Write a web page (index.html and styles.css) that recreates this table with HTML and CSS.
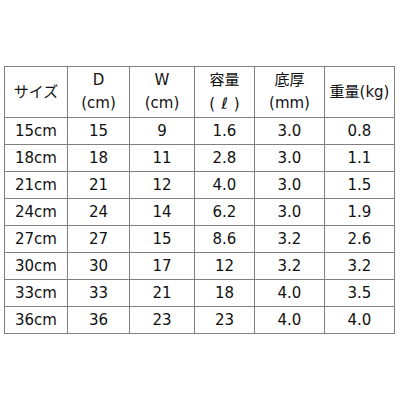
FILE: index.html
```html
<!DOCTYPE html>
<html>
<head>
<meta charset="utf-8">
<link rel="stylesheet" href="styles.css">
</head>
<body>
<table class="spec">
<colgroup>
<col class="c1"><col class="c2"><col class="c3"><col class="c4"><col class="c5"><col class="c6">
</colgroup>
<thead>
<tr class="head">
<th>サイズ</th>
<th>D<br>(cm)</th>
<th>W<br>(cm)</th>
<th>容量<br>(<span class="litre">ℓ</span>)</th>
<th>底厚<br>(mm)</th>
<th>重量(kg)</th>
</tr>
</thead>
<tbody>
<tr><td>15cm</td><td>15</td><td>9</td><td>1.6</td><td>3.0</td><td>0.8</td></tr>
<tr><td>18cm</td><td>18</td><td>11</td><td>2.8</td><td>3.0</td><td>1.1</td></tr>
<tr><td>21cm</td><td>21</td><td>12</td><td>4.0</td><td>3.0</td><td>1.5</td></tr>
<tr><td>24cm</td><td>24</td><td>14</td><td>6.2</td><td>3.0</td><td>1.9</td></tr>
<tr><td>27cm</td><td>27</td><td>15</td><td>8.6</td><td>3.2</td><td>2.6</td></tr>
<tr><td>30cm</td><td>30</td><td>17</td><td>12</td><td>3.2</td><td>3.2</td></tr>
<tr><td>33cm</td><td>33</td><td>21</td><td>18</td><td>4.0</td><td>3.5</td></tr>
<tr><td>36cm</td><td>36</td><td>23</td><td>23</td><td>4.0</td><td>4.0</td></tr>
</tbody>
</table>
</body>
</html>
```
FILE: styles.css
```css
html, body {
  margin: 0;
  padding: 0;
  background: #fff;
}
body {
  font-family: "DejaVu Sans", "Noto Sans CJK JP", sans-serif;
  font-size: 15px;
  color: #111;
}
.spec {
  border-collapse: collapse;
  table-layout: fixed;
  width: 390px;
  margin: 66px 0 0 4px;
}
.c1 { width: 63px; }
.c2 { width: 62px; }
.c3 { width: 65px; }
.c4 { width: 60px; }
.c5 { width: 70px; }
.c6 { width: 70px; }
.spec th, .spec td {
  border: 1px solid #808080;
  padding: 0;
  text-align: center;
  vertical-align: middle;
  font-weight: normal;
}
.spec td {
  height: 26px;
  line-height: 26px;
}
.head th {
  height: 50px;
  line-height: 23px;
}
.litre {
  font-family: "DejaVu Sans", sans-serif;
  font-size: 16px;
  margin: 0 6px;
}
```
